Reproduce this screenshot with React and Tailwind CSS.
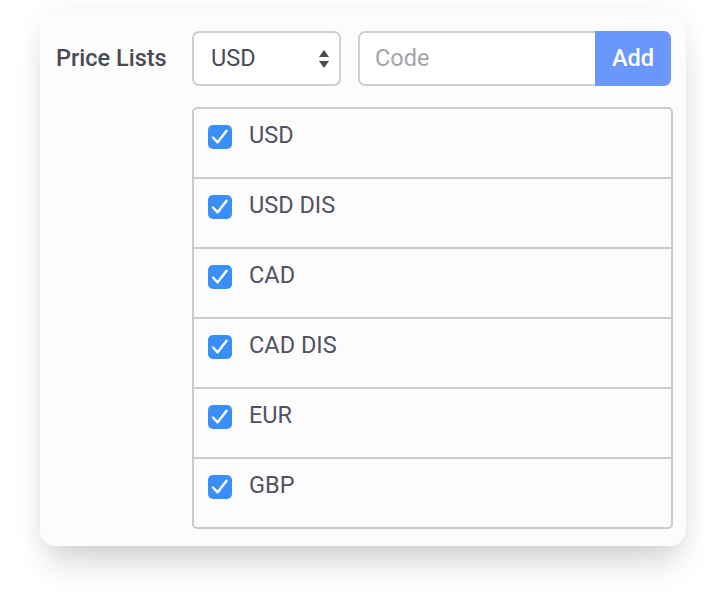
import React from "react";

const items = ["USD", "USD DIS", "CAD", "CAD DIS", "EUR", "GBP"];

function Check() {
  return (
    <div className="w-[24px] h-[24px] rounded-[5px] bg-[#3a8ef7] shrink-0">
      <svg width="24" height="24" viewBox="0 0 24 24" fill="none">
        <path d="M5 12.5 L9.6 17.3 L18.6 5.8" stroke="white" strokeWidth="2.4" strokeLinecap="round" strokeLinejoin="round" />
      </svg>
    </div>
  );
}

export default function App() {
  return (
    <div className="w-[726px] h-[610px] bg-white pt-[10px] pl-[40px]" style={{ fontFamily: "Roboto, 'Liberation Sans', sans-serif" }}>
      <div className="w-[646px] h-[536px] rounded-[16px] bg-[#fdfcfd] shadow-[0_24px_32px_-8px_rgba(0,0,0,0.16),0_0_24px_rgba(0,0,0,0.05)] pt-[21px] pl-[16px] flex">
        <div className="w-[136px] h-[55px] flex items-center text-[23.5px] font-medium text-[#4a4a55]">Price Lists</div>
        <div className="w-[481px] flex flex-col gap-[21px]">
          <div className="flex gap-[17px]">
            <div className="w-[149px] h-[55px] rounded-[7px] border-2 border-[#cfcfd2] bg-white flex items-center justify-between pl-[17px] pr-[9px] text-[23.5px] text-[#4a4a55]">
              <span>USD</span>
              <svg width="12" height="22" viewBox="0 0 12 22">
                <path d="M6 2 L11 9 H1 Z" fill="#4a4a55" />
                <path d="M6 20 L11 13 H1 Z" fill="#4a4a55" />
              </svg>
            </div>
            <div className="w-[313px] h-[55px] flex">
              <div className="flex-1 rounded-l-[7px] border-2 border-r-0 border-[#cfcfd2] bg-white flex items-center pl-[15px] text-[23.5px] text-[#a3a3a8]">Code</div>
              <div className="w-[76px] rounded-r-[7px] bg-[#6a97fb] flex items-center justify-center text-[23.5px] font-medium text-white">Add</div>
            </div>
          </div>
          <div className="w-[481px] rounded-[5px] border-2 border-[#cbcbce] bg-[#fdfcfd] flex flex-col">
            {items.map((it, i) => (
              <div key={it} className={i > 0 ? "h-[70px] border-t-2 border-[#cbcbce] flex items-start pt-[16px] pl-[14px] gap-[17px]" : "h-[68px] flex items-start pt-[16px] pl-[14px] gap-[17px]"}>
                <Check />
                <span className="text-[23.5px] leading-[20px] text-[#52525e]">{it}</span>
              </div>
            ))}
          </div>
        </div>
      </div>
    </div>
  );
}
